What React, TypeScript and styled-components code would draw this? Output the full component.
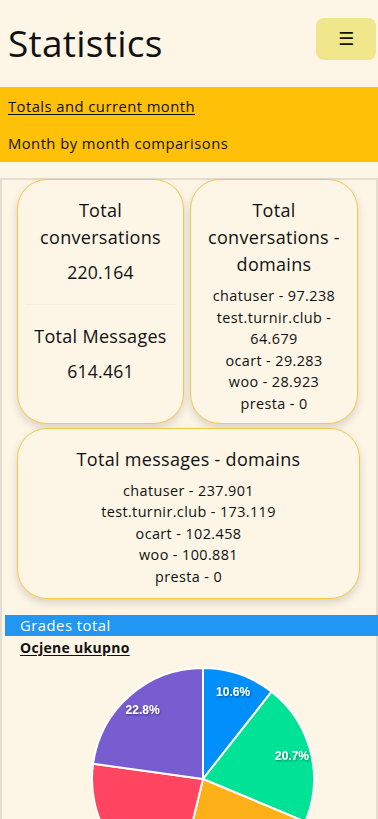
import React from "react";
import styled, { createGlobalStyle } from "styled-components";

const Global = createGlobalStyle`
  html, body { margin: 0; padding: 0; background: #fdf5e6; }
  body { font-family: "Open Sans", "Noto Sans", sans-serif; color: #111; overflow: hidden; }
  * { box-sizing: border-box; }
`;

const Page = styled.div`
  width: 378px;
  height: 819px;
  overflow: hidden;
  background: #fdf5e6;
`;

const Header = styled.header`
  height: 87px;
  display: flex;
  align-items: center;
  justify-content: space-between;
  padding: 0 2px 0 8px;
`;

const Title = styled.h1`
  margin: 0;
  font-size: 37px;
  font-weight: 400;
  letter-spacing: 0.25px;
  line-height: 1;
  margin-top: -2px;
`;

const MenuButton = styled.button`
  width: 60px;
  height: 42px;
  border: none;
  border-radius: 8px;
  background: #f0e68c;
  font-size: 18px;
  color: #111;
  margin-top: -10px;
  display: flex;
  align-items: center;
  justify-content: center;
  font-family: "DejaVu Sans", sans-serif;
`;

const Nav = styled.nav`
  background: #ffc107;
  display: flex;
  flex-direction: column;
  padding: 0 8px 1px;
`;

const NavLink = styled.a<{ $active?: boolean }>`
  height: 37px;
  display: flex;
  align-items: center;
  font-size: 14.8px;
  letter-spacing: 0.45px;
  color: #111;
  text-decoration: ${(p) => (p.$active ? "underline" : "none")};
  text-underline-offset: 2px;
`;

const Spacer = styled.div`
  height: 16px;
`;

const Container = styled.section`
  border: 2px solid #e3ddd2;
  border-bottom: none;
  min-height: 660px;
`;

const CardGrid = styled.div`
  display: grid;
  grid-template-columns: 167px 168px;
  column-gap: 6px;
  row-gap: 4px;
  padding: 0 0 0 15px;
  margin-top: -1px;
`;

const Card = styled.div<{ $wide?: boolean }>`
  grid-column: ${(p) => (p.$wide ? "1 / span 2" : "auto")};
  width: ${(p) => (p.$wide ? "343px" : "auto")};
  border: 1px solid #f7c948;
  border-radius: 30px;
  background: #fdf5e6;
  box-shadow: 0 4px 8px rgba(0, 0, 0, 0.14);
  display: flex;
  flex-direction: column;
  align-items: center;
  text-align: center;
  padding: ${(p) => (p.$wide ? "17px 8px 10px" : "17px 8px 8px")};
`;

const CardTitle = styled.div`
  font-size: 18px;
  letter-spacing: 0.3px;
  line-height: 27px;
`;

const BigNumber = styled.div`
  font-size: 17.6px;
  letter-spacing: 0.2px;
  line-height: 27px;
  margin-top: 8px;
`;

const Divider = styled.hr`
  width: 151px;
  border: none;
  border-top: 1px solid #f3ebdc;
  margin: 18px 0 18px;
`;

const List = styled.div`
  margin-top: 7px;
  display: flex;
  flex-direction: column;
`;

const ListItem = styled.div`
  font-size: 14.4px;
  letter-spacing: 0.4px;
  line-height: 21.6px;
`;

const ChartSection = styled.div`
  margin: 16px -2px 0 3px;
`;

const ChartBar = styled.div`
  background: #2196f3;
  color: #fff;
  height: 21px;
  display: flex;
  align-items: center;
  padding-left: 15px;
  font-size: 14.8px;
  letter-spacing: 0.5px;
`;

const ChartSubtitle = styled.div`
  padding-left: 15px;
  margin-top: 3px;
  font-size: 14px;
  font-weight: 700;
  letter-spacing: 0.3px;
  text-decoration: underline;
  text-underline-offset: 2px;
  line-height: 18px;
`;

const ChartSvg = styled.svg`
  display: block;
  margin-top: 5px;
`;

const slices = [
  { v: 10.6, c: "#008ffb" },
  { v: 20.7, c: "#00e396" },
  { v: 22.5, c: "#feb019" },
  { v: 23.4, c: "#ff4560" },
  { v: 22.8, c: "#775dd0" },
];

const SVG_H = 160;

function Pie() {
  const cx = 198;
  const cy = 117;
  const r = 111;
  let acc = 0;
  const pt = (a: number, rr: number) => {
    const rad = (a * Math.PI) / 180;
    return [cx + rr * Math.sin(rad), cy - rr * Math.cos(rad)];
  };
  const labels: { x: number; y: number; t: string }[] = [];
  let a = 0;
  slices.forEach((s) => {
    const mid = ((a + s.v / 2) / 100) * 360;
    a += s.v;
    const [x, y] = pt(mid, 92);
    if (y + 8 < SVG_H) labels.push({ x, y, t: `${s.v.toFixed(1)}%` });
  });
  return (
    <ChartSvg width={373} height={SVG_H} viewBox={`0 0 373 ${SVG_H}`}>
      <defs>
        <filter id="ds" x="-20%" y="-30%" width="140%" height="160%">
          <feDropShadow dx="1" dy="1" stdDeviation="1" floodColor="#000" floodOpacity="0.45" />
        </filter>
      </defs>
      {slices.map((s, i) => {
        const a0 = (acc / 100) * 360;
        acc += s.v;
        const a1 = (acc / 100) * 360;
        const [x0, y0] = pt(a0, r);
        const [x1, y1] = pt(a1, r);
        const large = a1 - a0 > 180 ? 1 : 0;
        return (
          <path
            key={i}
            d={`M${cx},${cy} L${x0},${y0} A${r},${r} 0 ${large} 1 ${x1},${y1} Z`}
            fill={s.c}
            stroke="#fff"
            strokeWidth={2}
          />
        );
      })}
      {labels.map((l, i) => (
        <text
          key={i}
          x={l.x}
          y={l.y + 4}
          textAnchor="middle"
          fill="#fff"
          fontSize="12"
          fontWeight="700"
          fontFamily="'Liberation Sans', Arial, sans-serif"
          filter="url(#ds)"
        >
          {l.t}
        </text>
      ))}
    </ChartSvg>
  );
}

export default function App() {
  return (
    <Page>
      <Global />
      <Header>
        <Title>Statistics</Title>
        <MenuButton>☰</MenuButton>
      </Header>
      <Nav>
        <NavLink $active href="#">Totals and current month</NavLink>
        <NavLink>Month by month comparisons</NavLink>
      </Nav>
      <Spacer />
      <Container>
        <CardGrid>
          <Card>
            <CardTitle>Total conversations</CardTitle>
            <BigNumber>220.164</BigNumber>
            <Divider />
            <CardTitle>Total Messages</CardTitle>
            <BigNumber>614.461</BigNumber>
          </Card>
          <Card>
            <CardTitle>Total conversations - domains</CardTitle>
            <List>
              <ListItem>chatuser - 97.238</ListItem>
              <ListItem>test.turnir.club - 64.679</ListItem>
              <ListItem>ocart - 29.283</ListItem>
              <ListItem>woo - 28.923</ListItem>
              <ListItem>presta - 0</ListItem>
            </List>
          </Card>
          <Card $wide>
            <CardTitle>Total messages - domains</CardTitle>
            <List>
              <ListItem>chatuser - 237.901</ListItem>
              <ListItem>test.turnir.club - 173.119</ListItem>
              <ListItem>ocart - 102.458</ListItem>
              <ListItem>woo - 100.881</ListItem>
              <ListItem>presta - 0</ListItem>
            </List>
          </Card>
        </CardGrid>
        <ChartSection>
          <ChartBar>Grades total</ChartBar>
          <ChartSubtitle>Ocjene ukupno</ChartSubtitle>
          <Pie />
        </ChartSection>
      </Container>
    </Page>
  );
}
